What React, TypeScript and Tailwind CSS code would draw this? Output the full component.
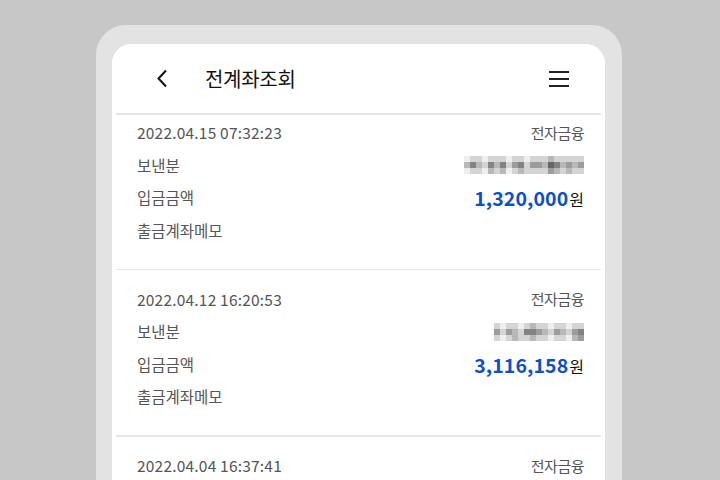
import React from "react";

const font = { fontFamily: '"Noto Sans CJK KR", "Noto Sans", sans-serif' };

type Entry = {
  date: string;
  amount: string;
  mosaic: number[][];
};

const entries: Entry[] = [
  {
    date: "2022.04.15 07:32:23",
    amount: "1,320,000",
    mosaic: [
      [0, 1, 1, 0, 1, 1, 1, 0, 1, 1, 0, 1, 1, 1, 2, 1, 1, 1, 1, 1],
      [2, 4, 2, 1, 4, 2, 4, 1, 3, 4, 1, 3, 3, 2, 5, 4, 2, 3, 2, 3],
      [0, 1, 1, 0, 2, 1, 2, 0, 1, 2, 1, 1, 1, 1, 3, 2, 1, 2, 1, 1],
    ],
  },
  {
    date: "2022.04.12 16:20:53",
    amount: "3,116,158",
    mosaic: [
      [1, 0, 1, 1, 0, 1, 2, 1, 1, 0, 1, 1, 0, 1, 1],
      [3, 1, 3, 2, 1, 4, 4, 3, 2, 1, 3, 2, 1, 3, 4],
      [1, 0, 1, 2, 1, 1, 2, 1, 1, 0, 1, 1, 0, 2, 3],
    ],
  },
  {
    date: "2022.04.04 16:37:41",
    amount: "2,450,000",
    mosaic: [[1, 1, 1], [2, 2, 2], [1, 1, 1]],
  },
];

const shades = ["#eeeeee", "#d4d4d4", "#b8b8b8", "#9c9c9c", "#838383", "#676767"];

function Mosaic({ cells }: { cells: number[][] }) {
  return (
    <div className="flex flex-col">
      {cells.map((row, i) => (
        <div key={i} className="flex">
          {row.map((v, j) => (
            <div key={j} className="w-[6px] h-[6px]" style={{ background: shades[v] }} />
          ))}
        </div>
      ))}
    </div>
  );
}

function EntryBlock({ e }: { e: Entry }) {
  return (
    <div>
      <div className="pt-[13px] pb-[22px] pl-[25px] pr-[21px] text-[15.5px] text-[#555555]">
        <div className="h-[32.5px] flex items-center justify-between">
          <span className="tracking-[0.2px]">{e.date}</span>
          <span className="text-[15px] tracking-[-0.5px]">전자금융</span>
        </div>
        <div className="h-[32.5px] flex items-center justify-between">
          <span>보낸분</span>
          <Mosaic cells={e.mosaic} />
        </div>
        <div className="h-[32.5px] flex items-center justify-between">
          <span>입금금액</span>
          <span className="flex items-baseline">
            <span className="text-[19.5px] font-semibold text-[#0c4fc7] tracking-[0.1px]">{e.amount}</span>
            <span className="text-[16px] text-[#111111] ml-[1px]">원</span>
          </span>
        </div>
        <div className="h-[32.5px] flex items-center justify-between">
          <span>출금계좌메모</span>
        </div>
      </div>
      <div className="mx-[4px] h-[1.5px] bg-[#e6e6e6]" />
    </div>
  );
}

export default function App() {
  return (
    <div className="w-[720px] h-[480px] overflow-hidden bg-[#c7c7c7] pt-[25px] pl-[96px]" style={font}>
      <div className="w-[526px] h-[480px] bg-[#e3e3e3] rounded-t-[30px] pt-[19px] pl-[16px] pr-[17px]">
        <div className="h-full bg-white rounded-t-[20px] overflow-hidden flex flex-col">
          <div className="relative z-10 bg-white">
            <div className="h-[69px] flex items-center pl-[44px] pr-[36px]">
              <svg width="12" height="19" viewBox="0 0 12 19" fill="none">
                <path d="M10 1.5L2.5 9.5L10 17.5" stroke="#111" strokeWidth="2" strokeLinejoin="miter" />
              </svg>
              <h1 className="ml-[37px] text-[20px] text-[#111111] tracking-[-0.3px]">전계좌조회</h1>
              <div className="ml-auto flex flex-col gap-[5px]">
                <div className="w-[20px] h-[2px] bg-[#222]" />
                <div className="w-[20px] h-[2px] bg-[#222]" />
                <div className="w-[20px] h-[2px] bg-[#222]" />
              </div>
            </div>
            <div className="mx-[4px] h-[1.5px] bg-[#e6e6e6]" />
          </div>
          <div className="-mt-[11px]">
            {entries.map((e) => (
              <EntryBlock key={e.date} e={e} />
            ))}
          </div>
        </div>
      </div>
    </div>
  );
}
